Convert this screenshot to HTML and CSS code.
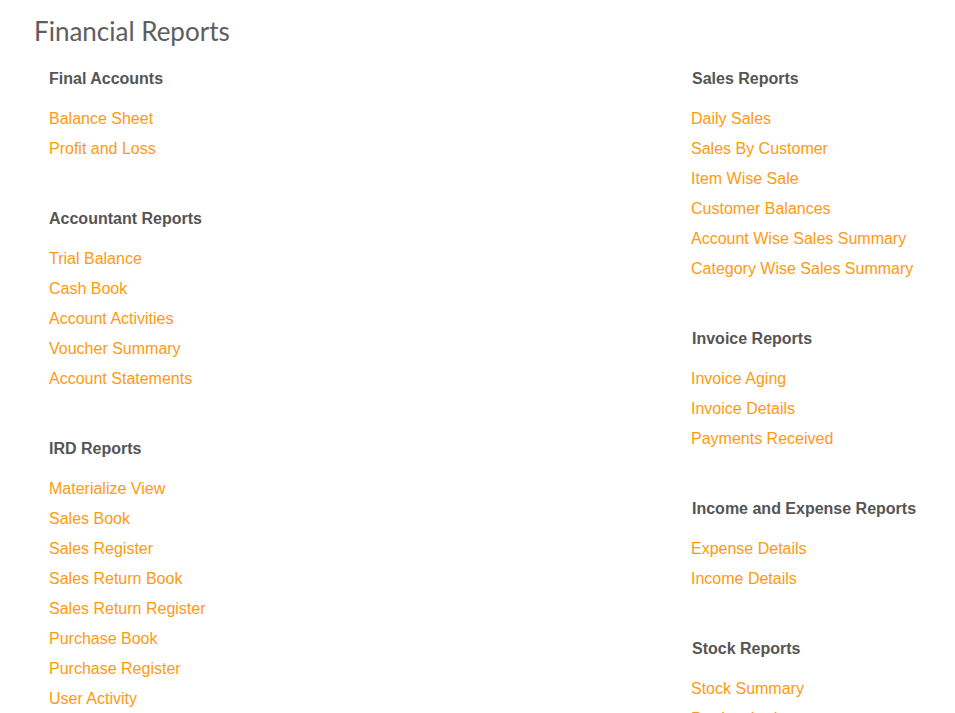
FILE: index.html
```html
<!DOCTYPE html>
<html lang="en">
  <head>
    <meta charset="UTF-8" />
    <meta name="viewport" content="width=device-width, initial-scale=1" />
    <title>Financial Reports</title>
    <link rel="stylesheet" href="styles.css">
  </head>
  <body>
    <h1 class="page-title">Financial Reports</h1>

    <div class="report-grid">
      <!-- Colonna sinistra -->
      <div class="report-col">
        <div class="report-group">
          <h2>Final Accounts</h2>
          <a href="#">Balance Sheet</a>
          <a href="#">Profit and Loss</a>
        </div>

        <div class="report-group">
          <h2>Accountant Reports</h2>
          <a href="#">Trial Balance</a>
          <a href="#">Cash Book</a>
          <a href="#">Account Activities</a>
          <a href="#">Voucher Summary</a>
          <a href="#">Account Statements</a>
        </div>

        <div class="report-group">
          <h2>IRD Reports</h2>
          <a href="#">Materialize View</a>
          <a href="#">Sales Book</a>
          <a href="#">Sales Register</a>
          <a href="#">Sales Return Book</a>
          <a href="#">Sales Return Register</a>
          <a href="#">Purchase Book</a>
          <a href="#">Purchase Register</a>
          <a href="#">User Activity</a>
        </div>
      </div>

      <!-- Colonna destra -->
      <div class="report-col">
        <div class="report-group">
          <h2>Sales Reports</h2>
          <a href="#">Daily Sales</a>
          <a href="#">Sales By Customer</a>
          <a href="#">Item Wise Sale</a>
          <a href="#">Customer Balances</a>
          <a href="#">Account Wise Sales Summary</a>
          <a href="#">Category Wise Sales Summary</a>
        </div>

        <div class="report-group">
          <h2>Invoice Reports</h2>
          <a href="#">Invoice Aging</a>
          <a href="#">Invoice Details</a>
          <a href="#">Payments Received</a>
        </div>

        <div class="report-group">
          <h2>Income and Expense Reports</h2>
          <a href="#">Expense Details</a>
          <a href="#">Income Details</a>
        </div>

        <div class="report-group">
          <h2>Stock Reports</h2>
          <a href="#">Stock Summary</a>
          <a href="#">Product Ledger</a>
        </div>
      </div>
    </div>
  </body>
</html>
```

FILE: styles.css
```css
body {
  margin: 0;
  background-color: #fff;
  font-family: "Liberation Sans", Arial, sans-serif;
  color: #555;
}

.page-title {
  font-family: "Lato", "Liberation Sans", sans-serif;
  font-weight: 400;
  font-size: 26px;
  line-height: 34px;
  color: #5e5e5e;
  margin: 14px 0 0 34px;
}

.report-grid {
  display: grid;
  grid-template-columns: 1fr 240px;
  padding: 16px 23px 0 49px;
}

.report-col {
  display: flex;
  flex-direction: column;
}

.report-group {
  display: flex;
  flex-direction: column;
  align-items: flex-start;
  margin-bottom: 40px;
}

.report-group h2 {
  font-size: 16px;
  font-weight: bold;
  line-height: 30px;
  color: #555;
  margin: 0 0 10px 0;
}

.report-group a {
  font-size: 16px;
  line-height: 30px;
  color: #ff9a0e;
  text-decoration: none;
  margin-left: -1px;
}

/* I link della colonna sinistra partono allineati al titolo */
.report-col:first-child a {
  margin-left: 0;
}

.report-group a:hover {
  text-decoration: underline;
}
```
